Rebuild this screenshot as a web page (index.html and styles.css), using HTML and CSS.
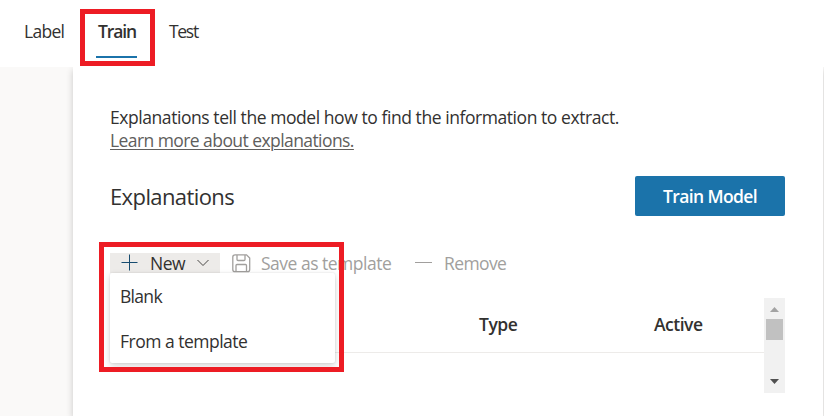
FILE: index.html
```html
<!DOCTYPE html>
<html lang="en">
<head>
<meta charset="utf-8">
<title>Train model</title>
<link rel="stylesheet" href="styles.css">
</head>
<body>
<nav class="tabs">
  <span class="tab tab-label">Label</span>
  <span class="tab active">Train</span>
  <span class="tab tab-test">Test</span>
</nav>
<div class="workspace">
  <main class="panel">
    <p class="intro"><span class="desc">Explanations tell the model how to find the information to extract.</span><br><a class="learn">Learn more about explanations.</a></p>
    <header class="heading">
      <h1>Explanations</h1>
      <button class="primary">Train Model</button>
    </header>
    <div class="toolbar">
      <div class="new">
        <svg class="plus" width="17" height="17" viewBox="0 0 17 17"><path d="M8.5 0.5V16.5M0.5 8.5H16.5"/></svg>
        <span class="new-text">New</span>
        <svg class="chevron" width="12" height="8" viewBox="0 0 12 8"><path d="M.5 1L6 6.5L11.5 1"/></svg>
      </div>
      <svg class="save" width="19" height="19" viewBox="0 0 19 19"><path d="M3 .8H14.500L17.700 4V15.500Q17.700 17.700 15.500 17.700H3Q.8 17.700 .8 15.500V3Q.8 .8 3 .8ZM5 1V5.500Q5 6.500 6 6.500H12Q13 6.500 13 5.500V1M4 17.500V11.500Q4 10.500 5 10.500H13.500Q14.500 10.500 14.500 11.500V17.500"/></svg>
      <span class="save-text">Save as template</span>
      <i class="minus"></i>
      <span class="remove-text">Remove</span>
      <div class="menu">
        <div class="item blank">Blank</div>
        <div class="item from">From a template</div>
      </div>
    </div>
    <div class="list">
      <div class="columns"><span></span><span class="type">Type</span><span class="act">Active</span></div>
      <div class="scrollbar">
        <svg width="9" height="5" viewBox="0 0 9 5"><path fill="#a3a3a3" d="M0 5L4.500 0L9 5Z"/></svg>
        <i class="thumb"></i>
        <svg class="down" width="9" height="5" viewBox="0 0 9 5"><path fill="#505050" d="M0 0H9L4.500 5Z"/></svg>
      </div>
    </div>
  </main>
</div>
<div class="mark mark-tab"></div>
<div class="mark mark-menu"></div>
</body>
</html>
```
FILE: styles.css
```css
* { box-sizing: border-box; }
body {
  margin: 0; width: 824px; height: 416px; overflow: hidden; position: relative;
  background: #fff; color: #323130;
  font: 17.5px/23px "Open Sans", "Noto Sans", sans-serif;
  letter-spacing: -0.5px;
}
span, a, h1, button, .item { white-space: nowrap; }
.tabs { display: flex; height: 67px; padding: 20px 0 0 24px; }
.tab { height: 38px; }
.tab-label { width: 72px; letter-spacing: -0.7px; }
.active { width: 41px; padding-left: 2px; font-weight: 600; letter-spacing: -1.1px; border-bottom: 2px solid #1b73aa; }
.tab-test { padding-left: 32px; letter-spacing: -1.3px; }
.workspace { height: 349px; padding-left: 73px; background: #faf9f8; overflow: hidden; }
.panel { width: 750px; height: 349px; padding: 39px 38px 0 37px; background: #fff; box-shadow: 0 3px 7px rgba(0,0,0,.2); }
.intro { margin: 0; height: 46px; }
.desc { letter-spacing: -0.435px; }
.learn { letter-spacing: -0.57px; color: #605e5c; text-decoration: underline; text-decoration-thickness: 1px; text-underline-offset: 2px; }
.heading { display: flex; justify-content: space-between; align-items: center; height: 40px; margin-top: 24px; }
h1 { margin: 0; font-size: 22px; line-height: 30px; font-weight: 400; letter-spacing: -0.6px; }
.primary { width: 150px; height: 40px; padding: 0; border: 0; border-radius: 2px; background: #1b73aa; color: #fff; font: 600 17.5px/23px "Open Sans", sans-serif; letter-spacing: -0.6px; }
.toolbar { position: relative; display: flex; height: 20px; margin-top: 37px; line-height: 20px; color: #a19f9d; }
.new { display: flex; width: 110px; height: 20px; padding-left: 11px; background: #edebe9; color: #323130; }
svg { display: block; flex: none; fill: none; }
.plus { margin-top: 1px; stroke: #174c70; }
.new-text { width: 52px; padding-left: 12px; }
.chevron { margin: 6px 0 0 7px; stroke: #484644; }
.save { margin: 1px 0 0 12px; stroke: #a19f9d; stroke-width: 1.3; }
.save-text { width: 164px; padding-left: 10px; }
.minus { width: 17px; height: 1px; margin-top: 9px; background: #a19f9d; }
.remove-text { padding-left: 12px; letter-spacing: -0.6px; }
.menu { position: absolute; z-index: 2; left: 0; top: 20px; width: 225px; height: 90px; background: #fff; border-radius: 2px; box-shadow: 0 3px 7px rgba(0,0,0,.16), 0 0 2px rgba(0,0,0,.12); color: #323130; }
.item { height: 45px; padding-left: 10px; line-height: 47px; }
.blank { letter-spacing: -0.7px; }
.list { display: flex; height: 95px; margin-top: 25px; }
.columns { display: grid; grid-template-columns: 369px 175px 110px; width: 654px; height: 55px; border-bottom: 1px solid #edebe9; line-height: 53px; font-weight: 600; }
.scrollbar { display: flex; flex-direction: column; align-items: center; width: 21px; padding: 9px 0; background: #f1f1f1; }
.thumb { width: 17px; height: 21px; margin-top: 7px; background: #c1c1c1; }
.down { margin-top: auto; }
.mark { position: absolute; z-index: 5; border: 5px solid #ed1c24; }
.mark-tab { left: 80px; top: 9px; width: 75px; height: 57px; }
.mark-menu { left: 99px; top: 242px; width: 245px; height: 130px; }
```
